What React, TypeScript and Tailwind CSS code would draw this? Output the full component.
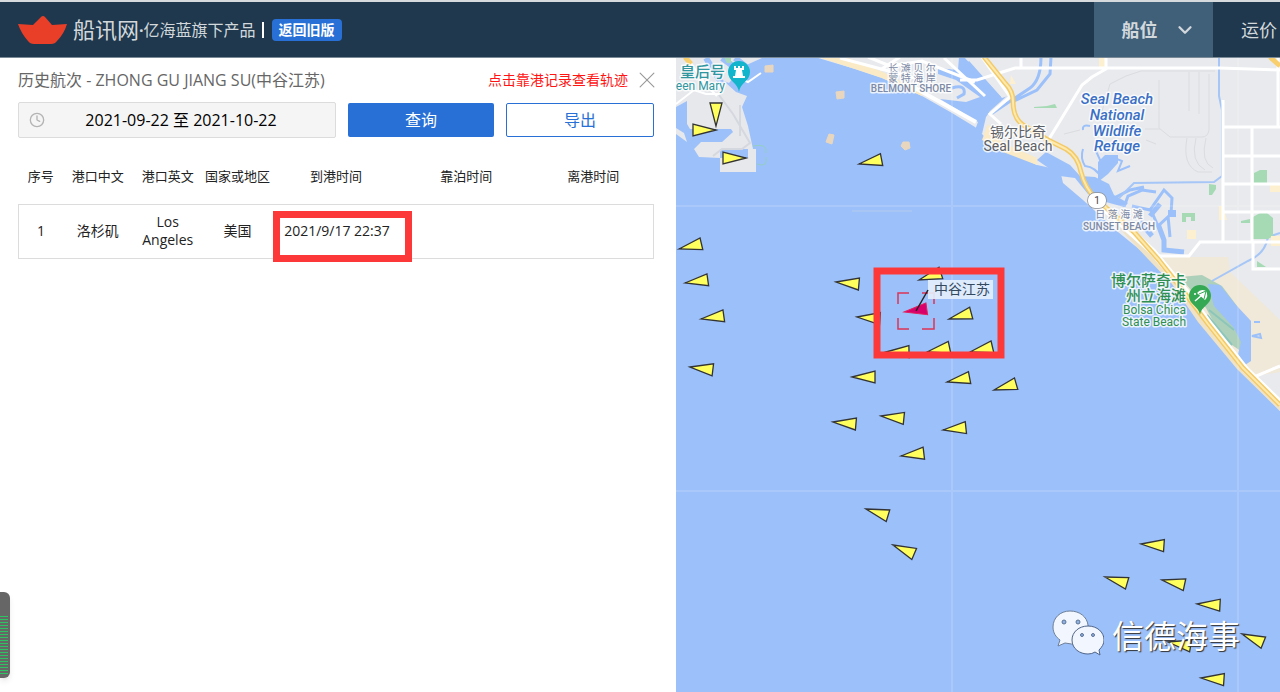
import React from 'react';
import { ChevronDown, Clock, X } from 'lucide-react';

// x / y is the bow of the ship, turn is the rotation of the hull behind it
const ships = [
  { x: 716, y: 126, turn: -90 },
  { x: 716, y: 130, turn: 180 },
  { x: 746, y: 158, turn: 180 },
  { x: 859, y: 164, turn: -11 },
  { x: 679, y: 249, turn: -13 },
  { x: 685, y: 283, turn: -8 },
  { x: 701, y: 319, turn: -8 },
  { x: 690, y: 367, turn: 7 },
  { x: 836, y: 282, turn: 5 },
  { x: 857, y: 317, turn: 4 },
  { x: 852, y: 377, turn: 0 },
  { x: 919, y: 280, turn: -18 },
  { x: 949, y: 319, turn: -15 },
  { x: 886, y: 352, turn: -1 },
  { x: 927, y: 352, turn: -12 },
  { x: 970, y: 352, turn: -13 },
  { x: 947, y: 382, turn: -11 },
  { x: 994, y: 390, turn: -16 },
  { x: 833, y: 422, turn: 5 },
  { x: 881, y: 416, turn: 6 },
  { x: 943, y: 430, turn: -6 },
  { x: 901, y: 456, turn: -7 },
  { x: 866, y: 509, turn: 17 },
  { x: 893, y: 545, turn: 23 },
  { x: 1141, y: 544, turn: 4 },
  { x: 1105, y: 577, turn: 16 },
  { x: 1162, y: 580, turn: 12 },
  { x: 1197, y: 604, turn: 3 },
  { x: 1168, y: 642, turn: 10 },
  { x: 1242, y: 634, turn: 22 },
  { x: 1201, y: 678, turn: 4 },
];

const columns = [
  { title: '序号', width: 'w-[7%]' },
  { title: '港口中文', width: 'w-[11%]' },
  { title: '港口英文', width: 'w-[11%]' },
  { title: '国家或地区', width: 'w-[11%]' },
  { title: '到港时间', width: 'w-[20%]' },
  { title: '靠泊时间', width: 'w-[21%]' },
  { title: '离港时间', width: 'w-[19%]' },
];

function Header() {
  return (
    <header className="flex h-[58px] shrink-0 items-stretch overflow-hidden border-t-2 border-b border-t-[#d6dadd] border-b-[#7b8a97] bg-[#1f384d] text-[#d3d8dc]">
      <div className="flex items-center pl-[18px]">
        <svg width="49" height="28" viewBox="0 0 49 28" aria-hidden="true">
          <path d="M0 8 L15 9 Q20 4 23 1 Q25 -1 27 1 L34 9 L49 8 Q46 18 39 25 Q37 28 33 28 H16 Q12 28 10 25 Q3 17 0 8Z" fill="#e93f28" />
        </svg>
        <span className="ml-1.5 text-[22px]">船讯网</span>
        <span className="text-base"><b>·</b>亿海蓝旗下产品</span>
        <span className="ml-1.5 h-4 w-0.5 bg-white"></span>
        <button className="ml-2 h-[22px] rounded-sm bg-[#2870d6] px-[7px] text-sm leading-5 font-bold text-white">返回旧版</button>
      </div>
      <nav className="ml-auto flex">
        <a href="#position" className="flex w-[119px] items-center justify-center gap-4 bg-[#40607a] pl-2.5 text-lg font-bold">
          船位
          <ChevronDown size={22} strokeWidth={2.5} />
        </a>
        <a href="#freight" className="flex w-[67px] items-center overflow-hidden pl-7 text-lg whitespace-nowrap">运价</a>
      </nav>
    </header>
  );
}

function VoyagePanel() {
  return (
    <section className="w-[676px] shrink-0 bg-white pr-[22px] pl-[18px] text-[#222]">
      <div className="flex h-11 items-center">
        <h1 className="text-base text-[#666]">历史航次 - ZHONG GU JIANG SU(中谷江苏)</h1>
        <p className="ml-auto text-sm text-[#ff1414]">点击靠港记录查看轨迹</p>
        <button aria-label="关闭" className="-mr-1 ml-2 text-[#999]">
          <X size={22} strokeWidth={1} className="scale-125" />
        </button>
      </div>

      <form className="flex items-center gap-3">
        <label className="flex h-9 w-1/2 items-center rounded-xs border border-[#dcdcdc] bg-[#f5f5f5] px-2.5">
          <Clock size={16} strokeWidth={2} className="shrink-0 text-[#b4b4b4]" />
          <input
            type="text"
            aria-label="日期范围"
            defaultValue="2021-09-22 至 2021-10-22"
            className="w-full min-w-0 pr-2 text-center text-base text-black outline-none"
          />
        </label>
        <button type="button" className="h-[34px] flex-1 rounded-xs bg-[#2870d6] text-base text-white">查询</button>
        <button type="button" className="h-[34px] flex-1 rounded-xs border border-[#2870d6] text-base text-[#2870d6]">导出</button>
      </form>

      <table className="mt-3 w-full table-fixed border-collapse text-center text-sm">
        <thead>
          <tr className="h-[54px]">
            {columns.map((c) => (
              <th key={c.title} className={`${c.width} text-[13px] font-normal whitespace-nowrap`}>{c.title}</th>
            ))}
          </tr>
        </thead>
        <tbody>
          <tr className="h-[54px] border border-[#dcdcdc]">
            <td>1</td>
            <td>洛杉矶</td>
            <td className="leading-[18px]">Los Angeles</td>
            <td>美国</td>
            <td className="relative pl-0.5 whitespace-nowrap">
              2021/9/17 22:37
              {/* highlight round the arrival time */}
              <div className="absolute top-1.5 left-px h-[51px] w-[139px] border-[7px] border-[#fd3838]"></div>
            </td>
            <td></td>
            <td></td>
          </tr>
        </tbody>
      </table>
    </section>
  );
}

function MapLand() {
  return (
    <g>
      {/* port */}
      <path d="M676 58 H700 L716 74 L736 92 L747 96 L742 107 L748 126 L753 149 H756 V172 H720 V158 L699 157 L694 149 L701 142 H722 L733 132 L731 129 H690 L687 124 V101 L676 107Z" fill="#e6e8ec" />
      <path d="M676 128 L684 133 L687 142 L676 134Z" fill="#e6e8ec" />
      <path d="M676 58 H762 L742 67 L729 83 L716 78 L700 60Z" fill="#e6e8ec" />
      <path d="M706 58 L722 84 M722 58 L745 75 M735 58 L760 78" stroke="#9cc0fa" strokeWidth="6" />
      <path d="M748 150 H756 M720 149 H748 V158 H720" fill="#9cc0fa" />
      <path d="M688 59 L706 85 L717 96 M676 104 L694 90 L706 94 H720 M736 77 L748 82 L761 73" stroke="#fff" strokeWidth="2" fill="none" />
      <path d="M719 95 L733 114 L750 143 L742 149 H722 L713 156 M740 105 V136" stroke="#d5d8de" strokeWidth="2" fill="none" />
      <path d="M753 146 Q768 143 766 153 M757 164 Q768 168 766 157" stroke="#93cfc0" fill="none" />
      {/* islands */}
      <path d="M765 66 L773 65 L773 72 L765 72Z M836 92 L844 91 L844 98 L837 99Z M829 134 L834 135 L832 144 L826 142Z M903 142 L909 142 L910 148 L905 150 L901 146Z" fill="#e9d6be" stroke="#e9d6be" strokeLinejoin="round" />

      {/* mainland */}
      <path d="M815 57 L855 69 L882 78 L922 96 L952 113 L975 127 L984 136 L1003 150 L1037 165 L1060 170 L1063 183 L1083 200 L1118 232 L1150 258 L1173 284 L1200 321 L1237 367 L1280 411 V57Z" fill="#e8eaed" />
      <path d="M818 57 L855 69 L882 78 L922 96 L922 92 L885 73 L858 62 L846 57Z" fill="#faeac5" />
      <path d="M988 124 L1003 143 L1037 158 L1037 165 L1003 152 L982 140Z" fill="#faeac5" />
      <path d="M1105 213 L1120 228 L1150 252 L1176 282 L1206 321 L1241 365 L1280 405 V411 L1237 369 L1198 322 L1172 284 L1148 259Z" fill="#efe2c5" />
      <path d="M1162 257 L1228 257 L1230 272 L1280 320 V372 L1256 376 L1236 353 L1206 316 L1180 284Z" fill="#f0e8d8" />

      {/* bay and marina */}
      <path d="M959 57 H980 L1008 95 L990 111 L986 117 L982 134 L975 130 L978 122 L940 99 L966 102 L980 97 L956 80 L938 74 L938 68 L958 70Z" fill="#9cc0fa" />
      <path d="M964 57 L982 57 L1008 96 L1002 98Z" fill="#e8eaed" />
      <path d="M968 62 L1000 98 M952 88 Q966 84 964 94 L957 98" stroke="#9cc0fa" strokeWidth="3" fill="none" />
      <path d="M1037 160 L1046 152 L1070 165 L1080 176 L1095 177 L1109 184 L1114 195 L1128 203 L1124 207 L1106 202 L1088 194 L1075 178 L1060 176Z" fill="#9cc0fa" />
      <path d="M1083 149 Q1080 158 1085 166 Q1096 167 1101 178 M1090 126 Q1082 124 1083 130 M1096 151 L1101 162 L1098 174 M1104 171 L1112 157 L1122 161 L1118 171 L1130 166" stroke="#9cc0fa" strokeWidth="2" fill="none" />
      <path d="M1098 162 L1105 155 L1118 155 L1118 163 L1108 174 L1098 182Z" fill="#9cc0fa" />
      <path d="M1114 198 L1130 190 L1144 187 M1124 207 L1128 196 L1142 190 L1156 192 M1132 206 L1150 210 L1164 190 L1172 198 L1171 214 L1158 226 L1150 208 M1168 216 L1170 237" stroke="#9cc0fa" strokeWidth="3" fill="none" />
      <path d="M1158 224 L1164 240 L1164 250 L1184 252 M1140 222 L1152 236 M1150 216 L1160 204" stroke="#9cc0fa" strokeWidth="5" fill="none" />
      <path d="M1168 210 H1176 V217 H1168Z" fill="#9cc0fa" />

      {/* wetlands */}
      <path d="M1180 277 L1202 275 L1222 286 L1240 310 L1242 352 L1222 338 L1206 308Z" fill="#add0ba" />
      <path d="M1208 284 L1220 285 L1236 305 L1251 321 V361 L1245 365 L1238 354 L1241 342 L1234 328 L1214 306Z" fill="#9cc0fa" />
      <path d="M1209 310 L1234 330 M1207 315 L1232 345" stroke="#8cc6bb" strokeWidth="2" />
      <path d="M1252 336 L1260 334 L1261 338Z M1254 322 H1260" stroke="#9cc0fa" strokeWidth="2" fill="none" />

      {/* canals */}
      <path d="M1041 57 Q1041 80 1030 88 L991 114 M1051 57 L1050 74 L1037 90 L1014 101" stroke="#9cc0fa" strokeWidth="3" fill="none" />
      <path d="M1219 57 V96 L1222 110 V176 L1214 182 L1134 183 L1119 198 M1280 233 L1268 237 Q1265 254 1248 261 L1212 281" stroke="#a6c6f7" strokeWidth="2" fill="none" />

      {/* airfield tracks */}
      <path d="M1100 118 L1110 84 L1126 76 L1141 71 H1215 M1189 72 V111 M1199 72 V114 M1209 74 V130 Q1208 137 1202 137 H1170 L1159 128 V80 M1145 129 H1160 M1146 140 L1156 144 M1187 138 Q1182 165 1198 172 H1212 M1196 138 Q1190 162 1205 170 M1206 138 Q1200 162 1213 168 M1064 134 L1080 130" stroke="#dadce0" fill="none" />

      {/* parks */}
      <path d="M1034 107 L1047 106 L1055 104 L1057 108 H1034Z M1254 173 L1260 170 H1267 V183 H1254Z M1209 184 L1216 185 V189 L1212 195 H1209Z M1182 213 H1195 V221 H1191 V217 H1186 V222 H1182Z M1253 217 L1260 213 H1267 L1273 218 V236 L1268 239 H1253Z M1241 221 L1250 219 V223 H1241Z M1257 261 L1266 267 H1257Z" fill="#a5dab5" />
      <path d="M1099 57 H1105 V69 H1099Z M1219 206 H1223 L1227 220 H1219Z M1270 184 H1280 V192 H1270Z M1187 230 H1196 V239 H1187Z M1271 236 H1280 V246 H1271Z M1011 75 L1016 84 L1010 84Z" fill="#fdf0d0" />

      {/* streets */}
      <path d="M960 80 L977 80 L1015 68 H1220 L1280 70 M1021 57 V68 M1106 57 V69 L1092 77 L1082 85 L1049 139 M1223 127 H1280 M1223 156 H1280 M1223 184 H1280 M1224 212 H1280 M1223 100 V241 M1252 127 V241 M1155 256 H1189 L1200 242 H1280 M1253 242 V269 H1280 M1254 377 L1280 366 M1278 57 V127" stroke="#fff" strokeWidth="3" fill="none" />
      <path d="M840 58 L885 70 L922 80 M868 57 L890 66 L922 61 L975 82 M944 58 L985 96 M900 57 L880 70 M982 57 L1010 97 L990 114 L1001 124" stroke="#fff" strokeWidth="3" fill="none" />
      <path d="M915 88 L976 122" stroke="#fff" strokeWidth="4" fill="none" />
      <path d="M1089 197 L1110 213 L1153 252 L1186 292 L1210 325 L1246 370 L1280 403" stroke="#fff" strokeWidth="7" fill="none" />

      {/* coast highway */}
      <path d="M984 57 L1005 83 Q1013 91 1013 101 Q1013 118 1023 125 L1048 140 L1066 149 Q1078 156 1081 172 Q1085 188 1096 199 L1134 232 L1158 259 L1184 292 L1208 324 L1243 368 L1280 405" stroke="#f3ca68" strokeWidth="5" fill="none" />
      <path d="M984 57 L1005 83 Q1013 91 1013 101 Q1013 118 1023 125 L1048 140 L1066 149 Q1078 156 1081 172 Q1085 188 1096 199 L1134 232 L1158 259 L1184 292 L1208 324 L1243 368 L1280 405" stroke="#ffe9ad" strokeWidth="2" fill="none" />
      <path d="M1270 57 L1280 66 M685 57 L691 64" stroke="#f8cf6c" strokeWidth="5" />
      <path d="M724 57 H731 V63 H727Z" fill="#a5dab5" />

      <path d="M952 58 V692 M1238 58 V692 M676 206 H1280 M676 491 H1280" stroke="#fff" strokeOpacity="0.14" strokeWidth="2" />
      <path d="M852 211 H912" stroke="#b4cbee" />
    </g>
  );
}

function MapLabels() {
  return (
    <g stroke="#fff" strokeOpacity="0.8" strokeWidth="3" strokeLinejoin="round" className="[paint-order:stroke] [font-family:Roboto,'Noto_Sans_CJK_SC',sans-serif]">
      <g fill="#2f96a0" textAnchor="end">
        <text x="725" y="77" fontSize="15" fontWeight="500">皇后号</text>
        <text x="725" y="90" fontSize="12">een Mary</text>
      </g>
      <g fill="#7d8aa5" textAnchor="middle">
        <text x="912" y="72" fontSize="10">长 滩 贝 尔</text>
        <text x="912" y="82" fontSize="10">蒙 特 海 岸</text>
        <text x="911" y="92" fontSize="10" fontWeight="500">BELMONT SHORE</text>
        <text x="1119" y="218" fontSize="10">日 落 海 滩</text>
        <text x="1119" y="230" fontSize="10" fontWeight="500">SUNSET BEACH</text>
      </g>
      <g fill="#5c6066" textAnchor="middle">
        <text x="1018" y="137" fontSize="14">锡尔比奇</text>
        <text x="1018" y="151" fontSize="14">Seal Beach</text>
      </g>
      <g fill="#3b70c6" fontSize="15" fontStyle="italic" textAnchor="middle" fontWeight="500">
        <text x="1117" y="104">Seal Beach</text>
        <text x="1117" y="120">National</text>
        <text x="1117" y="136">Wildlife</text>
        <text x="1117" y="151">Refuge</text>
      </g>
      <g fill="#2f8f52" textAnchor="end">
        <text x="1186" y="286" fontSize="15" fontWeight="500">博尔萨奇卡</text>
        <text x="1186" y="301" fontSize="15" fontWeight="500">州立海滩</text>
        <text x="1186" y="314" fontSize="12">Bolsa Chica</text>
        <text x="1186" y="326" fontSize="12">State Beach</text>
      </g>
      <rect x="1088" y="193" width="18" height="15" rx="7" fill="#fff" stroke="#8a8f96" strokeOpacity="1" strokeWidth="1.5" />
      <text x="1097" y="204" fontSize="10" fill="#444" stroke="none" textAnchor="middle">1</text>
    </g>
  );
}

function ShipMap() {
  return (
    <section className="relative min-w-0 flex-1 overflow-hidden bg-[#9cc0fa]">
      <svg viewBox="676 58 604 634" preserveAspectRatio="xMidYMid slice" className="absolute inset-0 h-full w-full">
        <MapLand />
        <MapLabels />

        {/* pins */}
        <path d="M739 92 C738 83 728 81 728 72 A11 11 0 0 1 750 72 C750 81 740 83 739 92Z" fill="#12b5cb" />
        <path d="M734 66 H736 V68 H738 V66 H740 V68 H742 V66 H744 V70 H742 L743 76 H745 V78 H733 V76 H735 L736 70 H734Z" fill="#fff" />
        <path d="M1200 315 C1199 306 1189 305 1189 296 A11 11 0 0 1 1211 296 C1211 305 1201 306 1200 315Z" fill="#34a853" />
        <path d="M1197 293 Q1201 288 1206 291 Q1209 296 1205 300Z" fill="#fff" />
        <path d="M1195 301 L1202 295 M1194 294 H1196" stroke="#fff" strokeWidth="1.5" />
        <path d="M1199 294 L1206 291 L1204 299" stroke="#34a853" fill="none" />

        {ships.map((s) => (
          <path
            key={`${s.x}-${s.y}`}
            d="M0 0 L23 -6 V6Z"
            transform={`translate(${s.x} ${s.y}) rotate(${s.turn})`}
            fill="#ffff5e"
            stroke="#333"
            strokeWidth="1.3"
          />
        ))}

        {/* selected ship */}
        <path d="M0 0 L23 -6 V6Z" transform="translate(904 312) rotate(-8)" fill="#d9006c" stroke="#e0245e" />
        <path d="M909 293 H898 V304 M922 293 H934 V304 M898 318 V329 H909 M922 329 H934 V318" stroke="#dd3355" strokeWidth="1.5" fill="none" />
        <rect x="928" y="280" width="65" height="19" fill="#e6f0fd" fillOpacity="0.9" />
        <path d="M916 311 L928 290" stroke="#222" strokeWidth="1.5" />
        <text x="934" y="294" fontSize="14" fill="#34495e">中谷江苏</text>
        <rect x="877" y="271" width="124" height="84" fill="none" stroke="#fd3838" strokeWidth="7" />
      </svg>

      <div className="absolute right-10 bottom-9 flex items-end gap-2">
        <svg width="52" height="46" viewBox="0 0 52 46" aria-hidden="true">
          <path d="M18 1 C8 1 1 8 1 17 C1 23 4 27 8 30 L6 36 L13 33 Q20 35 25 33 C36 30 37 23 36 15 C35 7 28 1 18 1Z" fill="#f2f7ff" stroke="#6d7f99" />
          <path d="M36 16 C27 16 20 22 20 30 C20 39 28 44 36 44 Q40 44 43 42 L48 45 L47 40 C50 37 52 34 52 30 C52 22 45 16 36 16Z" fill="#f2f7ff" stroke="#4f6488" />
          <g fill="#8fb0e0" stroke="#5c7396">
            <circle cx="12" cy="12" r="2" />
            <circle cx="26" cy="12" r="2" />
            <circle cx="30" cy="25" r="1.5" />
            <circle cx="41" cy="25" r="1.5" />
          </g>
        </svg>
        <span className="text-[32px] leading-10 text-white [text-shadow:1px_1px_1px_#333]">信德海事</span>
      </div>
    </section>
  );
}

export default function App() {
  return (
    <div className="flex h-screen flex-col overflow-hidden bg-white [font-family:'Open_Sans','Noto_Sans_CJK_SC',sans-serif]">
      <Header />
      <main className="flex min-h-0 flex-1">
        <VoyagePanel />
        <ShipMap />
      </main>

      {/* level meter stuck to the left edge */}
      <div className="fixed bottom-3.5 left-0 h-[86px] w-2.5 rounded-r-md bg-[#666] pt-6 pr-0.5 pb-1 shadow-md">
        <div className="h-full bg-[repeating-linear-gradient(#2fc463_0_1px,#666_1px_3px)]"></div>
      </div>
    </div>
  );
}
